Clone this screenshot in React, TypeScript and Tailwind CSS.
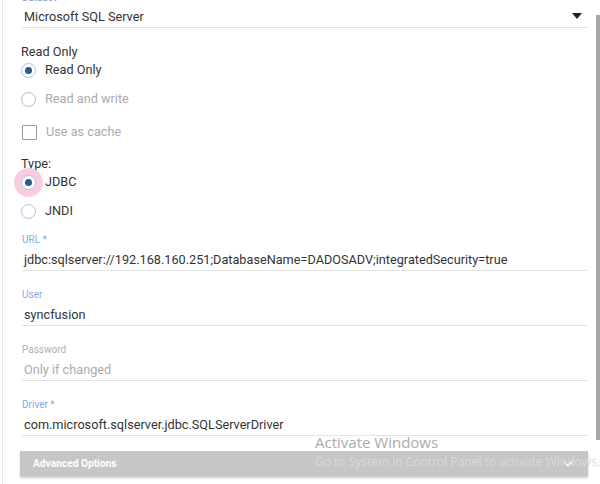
import { ChevronDown } from 'lucide-react';

const font = { fontFamily: 'Roboto, "Liberation Sans", sans-serif' };

function Radio({ label, checked, disabled, halo, mt }: { label: string; checked?: boolean; disabled?: boolean; halo?: boolean; mt: string }) {
  return (
    <div className={`flex items-center h-[20px] ${mt}`}>
      <div className="relative w-[15px] h-[15px] ml-[21px]">
        {halo && <div className="absolute -left-[7px] -top-[7px] w-[29px] h-[29px] rounded-full bg-[#f9cde0]" />}
        <div
          className={`relative w-[15px] h-[15px] rounded-full border-[1.5px] bg-white flex items-center justify-center ${
            disabled ? 'border-[#b8b8b8]' : 'border-[#a9c5e6]'
          }`}
        >
          {checked && <div className="w-[7px] h-[7px] rounded-full bg-[#2c5b8c]" />}
        </div>
      </div>
      <span className={`ml-[9px] text-[12.7px] ${disabled ? 'text-[#ababab]' : 'text-[#333]'}`}>{label}</span>
    </div>
  );
}

function Field({ label, value, labelColor, valueColor, mt = 'mt-[18px]' }: { label: string; value: string; labelColor: string; valueColor: string; mt?: string }) {
  return (
    <div className={`${mt} ml-[2px]`}>
      <div className={`h-[12px] leading-[12px] text-[10px] ${labelColor}`}>{label}</div>
      <div className={`mt-[4px] h-[21px] leading-[20px] pl-[2px] text-[12.7px] border-b border-[#e2e2e2] ${valueColor}`}>{value}</div>
    </div>
  );
}

export default function App() {
  return (
    <div className="relative w-[600px] h-[484px] overflow-hidden bg-white" style={font}>
      <div className="absolute left-[2px] top-0 bottom-0 w-[1px] bg-[#e4e4e4]" />
      <div className="absolute right-0 top-[15px] h-[425px] w-[4px] bg-[#a6a6a6]" />

      <div className="pl-[20px] pr-[12px]">
        {/* top select, label scrolled partly out of view */}
        <div className="-mt-[8px] ml-[2px]">
          <div className="h-[12px] leading-[12px] text-[10px] text-[#7fa7d8]">Dataset</div>
          <div className="mt-[3px] h-[21px] leading-[20px] pl-[2px] text-[12.7px] text-[#333] border-b border-[#e2e2e2] flex items-center justify-between">
            <span>Microsoft SQL Server</span>
            <svg width="10" height="6" viewBox="0 0 10 6" className="mr-[6px] mt-[-2px]">
              <path d="M0 0h10L5 6z" fill="#222" />
            </svg>
          </div>
        </div>

        <div className="mt-[16px] ml-[1px] h-[16px] leading-[16px] text-[12.7px] text-[#333]">Read Only</div>
        <div className="-ml-[20px]">
          <Radio label="Read Only" checked mt="mt-0" />
          <Radio label="Read and write" disabled mt="mt-[9px]" />
        </div>

        <div className="flex items-center h-[20px] mt-[13px]">
          <div className="ml-[2px] w-[15px] h-[15px] border-[1.5px] border-[#9a9a9a] rounded-[1px]" />
          <span className="ml-[9px] text-[12.7px] text-[#ababab]">Use as cache</span>
        </div>

        <div className="mt-[14px] ml-[1px] h-[16px] leading-[16px] text-[12.7px] text-[#333]">Type:</div>
        <div className="-ml-[20px]">
          <Radio label="JDBC" checked halo mt="mt-0" />
          <Radio label="JNDI" mt="mt-[9px]" />
        </div>

        <Field
          mt="mt-[13px]"
          label="URL *"
          labelColor="text-[#88acd8]"
          value="jdbc:sqlserver://192.168.160.251;DatabaseName=DADOSADV;integratedSecurity=true"
          valueColor="text-[#333]"
        />
        <Field label="User" labelColor="text-[#88acd8]" value="syncfusion" valueColor="text-[#333]" />
        <Field label="Password" labelColor="text-[#b0b0b0]" value="Only if changed" valueColor="text-[#ababab]" />
        <Field label="Driver *" labelColor="text-[#88acd8]" value="com.microsoft.sqlserver.jdbc.SQLServerDriver" valueColor="text-[#333]" />

        <div className="mt-[15px] h-[25px] bg-[#c6c6c6] shadow-[0_2px_2px_rgba(0,0,0,0.2)] flex items-center justify-between px-[13px]">
          <span className="text-[10.2px] font-bold text-white">Advanced Options</span>
          <ChevronDown className="w-[14px] h-[14px] text-white" strokeWidth={3} />
        </div>
      </div>

      <div className="absolute left-[315px] top-[432px] pointer-events-none whitespace-nowrap" style={{ fontFamily: '"Open Sans", "Noto Sans", sans-serif' }}>
        <div className="text-[15px] leading-[20px] text-[#ababab]">Activate Windows</div>
        <div className="text-[12px] leading-[18px] mt-[1px] text-[#dadada]">Go to System in Control Panel to activate Windows.</div>
      </div>
    </div>
  );
}
